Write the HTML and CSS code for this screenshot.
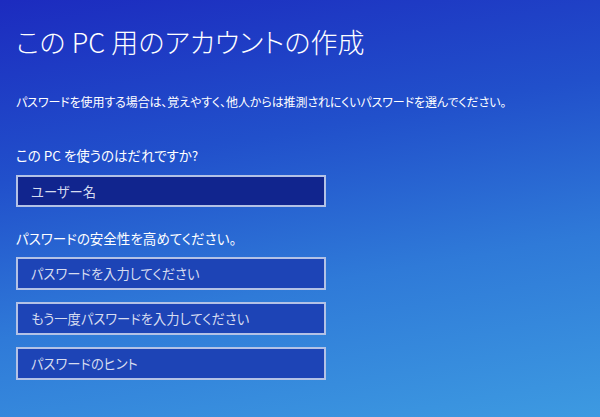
FILE: index.html
```html
<!DOCTYPE html>
<html lang="ja">
<head>
<meta charset="utf-8">
<title>このPC用のアカウントの作成</title>
<link rel="stylesheet" href="styles.css">
</head>
<body>
<main class="screen">
  <h1 class="title">この PC 用のアカウントの作成</h1>
  <p class="intro">パスワードを使用する場合は、覚えやすく、他人からは推測されにくいパスワードを選んでください。</p>
  <section class="group">
    <p class="label">この PC を使うのはだれですか?</p>
    <div class="field field-focus">ユーザー名</div>
  </section>
  <section class="group">
    <p class="label">パスワードの安全性を高めてください。</p>
    <div class="fields">
      <div class="field">パスワードを入力してください</div>
      <div class="field">もう一度パスワードを入力してください</div>
      <div class="field">パスワードのヒント</div>
    </div>
  </section>
</main>
</body>
</html>
```
FILE: styles.css
```css
html, body {
  margin: 0;
  padding: 0;
}
body {
  font-family: "Noto Sans CJK JP", "Noto Sans", sans-serif;
  color: #fff;
}
.screen {
  box-sizing: border-box;
  width: 600px;
  height: 417px;
  padding: 23px 16px 0;
  background: linear-gradient(170deg, #1c2bbf 0%, #2150cb 35%, #2f7ad8 65%, #3d9ae1 100%);
  overflow: hidden;
}
.title {
  margin: 0;
  font-size: 27px;
  line-height: 38px;
  font-weight: 300;
  letter-spacing: 0.1px;
  font-feature-settings: "palt";
}
.intro {
  margin: 32px 0 0;
  font-size: 12px;
  line-height: 18px;
  letter-spacing: -0.1px;
  font-feature-settings: "palt";
}
.group {
  margin-top: 35px;
}
.group + .group {
  margin-top: 22px;
}
.label {
  margin: 0;
  font-size: 13.5px;
  line-height: 18px;
  font-feature-settings: "palt";
}
.field {
  box-sizing: border-box;
  width: 310px;
  height: 33px;
  margin-top: 11px;
  padding: 0 13px;
  display: flex;
  align-items: center;
  border: 2px solid #b3c2e6;
  background: #1d44b6;
  color: #d6dcf0;
  font-size: 13.3px;
  font-feature-settings: "palt";
}
.fields {
  display: flex;
  flex-direction: column;
  gap: 12px;
  margin-top: 10px;
}
.fields .field {
  margin-top: 0;
}
.field-focus {
  background: #11258e;
  height: 32px;
}
```
